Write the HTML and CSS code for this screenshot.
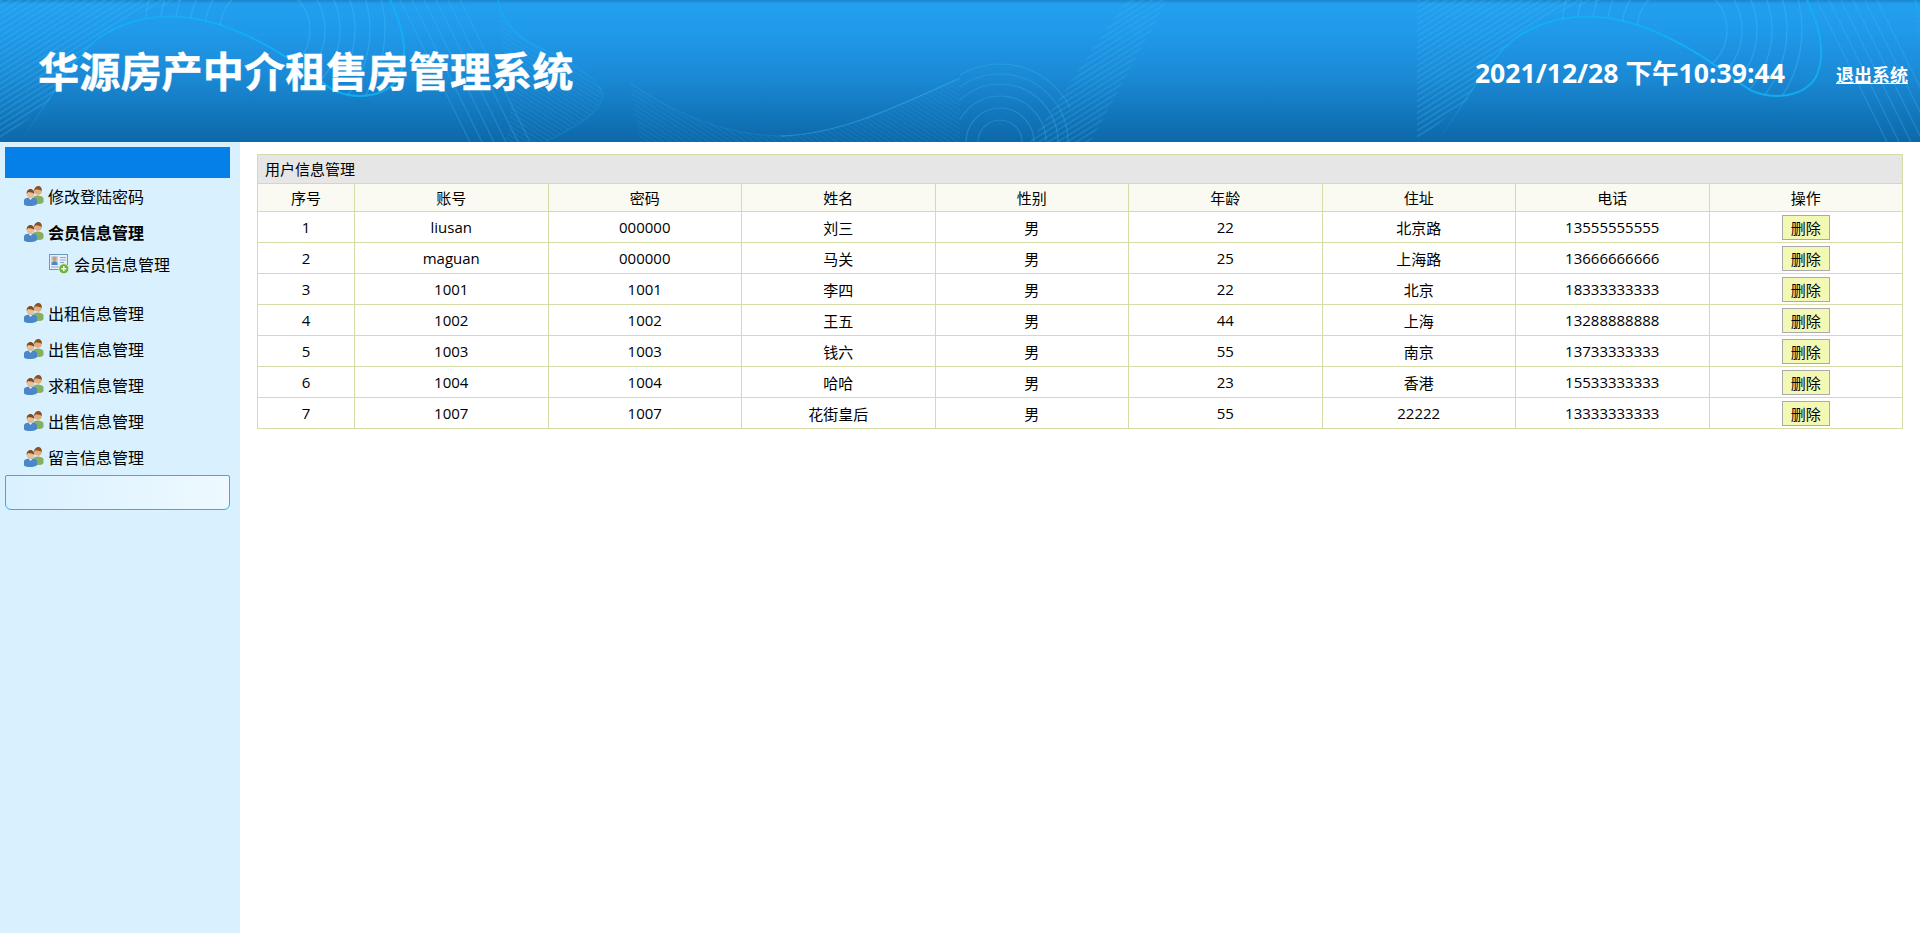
FILE: index.html
```html
<!DOCTYPE html>
<html lang="zh-CN">
<head>
  <meta charset="UTF-8" />
  <title>华源房产中介租售房管理系统</title>
  <link rel="stylesheet" href="styles.css">
</head>
<body>
  <svg class="sprites" width="0" height="0">
    <defs>
      <pattern id="hatch" width="5" height="5" patternUnits="userSpaceOnUse" patternTransform="rotate(-32)">
        <rect width="5" height="1.6" fill="#3fbdf7"/>
      </pattern>
      <pattern id="hatchB" width="4" height="4" patternUnits="userSpaceOnUse" patternTransform="rotate(32)">
        <rect width="4" height="1.2" fill="#3fbdf7"/>
      </pattern>
      <clipPath id="above-curve">
        <path d="M100 37C150 5 205 15 250 37 290 56 310 75 333 90 360 102 390 95 400 75 410 50 400 20 390 0H130Z"/>
      </clipPath>
      <clipPath id="right-half">
        <rect x="960" y="0" width="110" height="142"/>
      </clipPath>
      <linearGradient id="fade-left" x1="0" y1="1" x2="0" y2="0">
        <stop offset="0" stop-color="#12b2f6" stop-opacity="0"/>
        <stop offset="1" stop-color="#12b2f6" stop-opacity=".8"/>
      </linearGradient>
      <symbol id="wave" viewBox="0 0 1417 142">
        <path d="M0 0H190C130 10 90 30 50 100L0 142Z" fill="url(#hatch)" opacity=".3"/>
        <path d="M20 142C50 100 70 60 100 37" fill="none" stroke="url(#fade-left)" stroke-width="1.500"/>
        <path d="M100 37C150 5 205 15 250 37 290 56 310 75 333 90 360 102 390 95 400 75 410 50 400 20 390 0" fill="none" stroke="#12b2f6" stroke-width="2" opacity=".85"/>
        <g fill="none" stroke="#3fbdf7" stroke-width="1.300" opacity=".38" clip-path="url(#above-curve)">
          <circle cx="265" cy="30" r="45"/>
          <circle cx="265" cy="30" r="60"/>
          <circle cx="265" cy="30" r="75"/>
          <circle cx="265" cy="30" r="90"/>
          <circle cx="265" cy="30" r="105"/>
          <circle cx="265" cy="30" r="120"/>
        </g>
        <g fill="none" stroke="#3fbdf7" stroke-width="1.200" opacity=".3">
          <path d="M400 0L470 142"/><path d="M412 0L482 142"/><path d="M424 0L494 142"/>
          <path d="M436 0L506 142"/><path d="M448 0L518 142"/><path d="M460 0L530 142"/>
        </g>
        <path d="M498 0C500 50 560 40 603 90 600 115 570 130 545 142H505C520 100 498 50 498 0Z" fill="url(#hatchB)" opacity=".16"/>
        <path d="M498 0C503 25 520 40 545 50" fill="none" stroke="#12b2f6" stroke-width="1.800" opacity=".6"/>
        <path d="M545 50C575 62 598 78 603 95 600 115 570 130 545 142" fill="none" stroke="#12b2f6" stroke-width="1.500" opacity=".22"/>
        <path d="M630 83C670 110 720 135 780 136 840 135 900 105 960 78V142H640Z" fill="url(#hatchB)" opacity=".13"/>
        <path d="M780 136C840 135 900 105 960 78" fill="none" stroke="#3fbdf7" stroke-width="1.300" opacity=".4"/>
        <path d="M630 83C670 110 720 135 780 136" fill="none" stroke="#3fbdf7" stroke-width="1" opacity=".16"/>
        <g fill="none" stroke="#3fbdf7" stroke-width="1.200" opacity=".3" clip-path="url(#right-half)">
          <circle cx="1000" cy="142" r="22"/>
          <circle cx="1000" cy="142" r="34"/>
          <circle cx="1000" cy="142" r="46"/>
          <circle cx="1000" cy="142" r="58"/>
          <circle cx="1000" cy="142" r="68"/>
          <circle cx="1000" cy="142" r="78"/>
        </g>
        <path d="M1126 0H1168L1090 142H1030Z" fill="url(#hatch)" opacity=".25"/>
      </symbol>
      <symbol id="icon-users" viewBox="0 0 20 20">
        <path d="M9 18V12.500C9 10.500 11 9.500 13.500 9.500S19.500 10.500 19.500 12.500V15.500C19.500 17 18 18 15 18Z" fill="#86b060"/>
        <circle cx="14" cy="5" r="3.800" fill="#e0ac80"/>
        <path d="M10.200 5C10 1.500 12.500 0 14.500 0 16.500 0 18 1.500 17.900 5 16.500 3.500 13 3.500 12 3.200 11 3.800 10.800 4.500 10.200 5Z" fill="#8a5226"/>
        <path d="M0 18V14.500C0 12.500 2.500 11.500 6.500 11.500S13 12.500 13 14.500V17.500C13 19 10.500 20 6.500 20S0 19.500 0 18Z" fill="#4a86c8"/>
        <path d="M4.500 11.700H8.500L6.500 14Z" fill="#e8f2fb"/>
        <circle cx="6.500" cy="7.800" r="3.800" fill="#ecbc92"/>
        <path d="M2.700 7.800C2.500 4.500 4.500 3 6.500 3S10.500 4.500 10.300 7.800C9 6.300 6 6.500 4.500 6 3.800 6.500 3.200 7 2.700 7.800Z" fill="#7f4a22"/>
      </symbol>
      <symbol id="icon-card" viewBox="0 0 20 20">
        <rect x=".5" y=".5" width="18" height="15" fill="#e6f0fa" stroke="#6f97c4"/>
        <rect x="2" y="2" width="7" height="9" fill="#bcd3ea"/>
        <circle cx="5.500" cy="4.800" r="2.200" fill="#d69a6a"/>
        <path d="M2.500 11C2.500 8 4 7.300 5.500 7.300S8.500 8 8.500 11Z" fill="#4a86c8"/>
        <path d="M11 3.500H17M11 6H17M11 8.500H15" stroke="#8ca8c6"/>
        <path d="M2 13H10" stroke="#8ca8c6"/>
        <circle cx="14.800" cy="14.800" r="5" fill="#6cb33a" stroke="#eaf5de" stroke-width=".8"/>
        <path d="M12.300 14.800H17.300M14.800 12.300V17.300" stroke="#fff" stroke-width="1.500"/>
      </symbol>
    </defs>
  </svg>

  <header class="top">
    <svg class="top-wave" width="2834" height="142" aria-hidden="true">
      <use href="#wave" width="1417" height="142"/>
      <use href="#wave" x="1417" width="1417" height="142"/>
    </svg>
    <h1 class="top-title">华源房产中介租售房管理系统</h1>
    <div class="top-clock">2021/12/28 下午10:39:44</div>
    <a class="top-exit" href="#">退出系统</a>
  </header>

  <div class="page">
    <aside class="side">
      <div class="side-head"></div>
      <a class="menu-item" href="#"><svg class="ico"><use href="#icon-users"/></svg>修改登陆密码</a>
      <a class="menu-item menu-open" href="#"><svg class="ico"><use href="#icon-users"/></svg>会员信息管理</a>
      <div class="submenu">
        <a class="sub-item" href="#"><svg class="ico"><use href="#icon-card"/></svg>会员信息管理</a>
      </div>
      <a class="menu-item" href="#"><svg class="ico"><use href="#icon-users"/></svg>出租信息管理</a>
      <a class="menu-item" href="#"><svg class="ico"><use href="#icon-users"/></svg>出售信息管理</a>
      <a class="menu-item" href="#"><svg class="ico"><use href="#icon-users"/></svg>求租信息管理</a>
      <a class="menu-item" href="#"><svg class="ico"><use href="#icon-users"/></svg>出售信息管理</a>
      <a class="menu-item" href="#"><svg class="ico"><use href="#icon-users"/></svg>留言信息管理</a>
      <div class="side-foot"></div>
    </aside>

    <main class="content">
      <table class="grid">
        <colgroup>
          <col class="col-id">
          <col><col><col><col><col><col><col><col>
        </colgroup>
        <thead>
          <tr><th class="grid-title" colspan="9">用户信息管理</th></tr>
          <tr class="grid-head">
            <th>序号</th><th>账号</th><th>密码</th><th>姓名</th><th>性别</th><th>年龄</th><th>住址</th><th>电话</th><th>操作</th>
          </tr>
        </thead>
        <tbody>
          <tr><td>1</td><td>liusan</td><td>000000</td><td>刘三</td><td>男</td><td>22</td><td>北京路</td><td>13555555555</td><td><button class="btn-del">删除</button></td></tr>
          <tr><td>2</td><td>maguan</td><td>000000</td><td>马关</td><td>男</td><td>25</td><td>上海路</td><td>13666666666</td><td><button class="btn-del">删除</button></td></tr>
          <tr><td>3</td><td>1001</td><td>1001</td><td>李四</td><td>男</td><td>22</td><td>北京</td><td>18333333333</td><td><button class="btn-del">删除</button></td></tr>
          <tr><td>4</td><td>1002</td><td>1002</td><td>王五</td><td>男</td><td>44</td><td>上海</td><td>13288888888</td><td><button class="btn-del">删除</button></td></tr>
          <tr><td>5</td><td>1003</td><td>1003</td><td>钱六</td><td>男</td><td>55</td><td>南京</td><td>13733333333</td><td><button class="btn-del">删除</button></td></tr>
          <tr><td>6</td><td>1004</td><td>1004</td><td>哈哈</td><td>男</td><td>23</td><td>香港</td><td>15533333333</td><td><button class="btn-del">删除</button></td></tr>
          <tr><td>7</td><td>1007</td><td>1007</td><td>花街皇后</td><td>男</td><td>55</td><td>22222</td><td>13333333333</td><td><button class="btn-del">删除</button></td></tr>
        </tbody>
      </table>
    </main>
  </div>
</body>
</html>
```

FILE: styles.css
```css
* {
  box-sizing: border-box;
  margin: 0;
  padding: 0;
}

html, body {
  height: 100%;
}

body {
  background: #fff;
  color: #000;
  font-family: "Open Sans", "Noto Sans CJK SC", sans-serif;
  overflow: hidden;
}

a {
  color: inherit;
  text-decoration: none;
}

.sprites {
  display: block;
  height: 0;
}

/* header */
.top {
  position: relative;
  display: flex;
  align-items: center;
  height: 142px;
  padding: 0 12px 0 38px;
  overflow: hidden;
  color: #fff;
  background: linear-gradient(#1a86cc 0, #22a0ef 4px, #209aea 30px, #1b8ad6 75px, #0d68a8 100%);
}

.top-wave {
  position: absolute;
  top: 0;
  left: 0;
}

.top-title {
  position: relative;
  flex: 1;
  margin-top: -4px;
  font-size: 41.2px;
  font-weight: 700;
  -webkit-text-stroke: 0.4px #fff;
}

.top-clock {
  position: relative;
  font-size: 26.6px;
  font-weight: 700;
}

.top-exit {
  position: relative;
  margin-top: 6px;
  margin-left: 51px;
  font-size: 18px;
  font-weight: 700;
  text-decoration: underline;
}

/* layout */
.page {
  display: flex;
  height: calc(100% - 142px);
}

.side {
  flex: 0 0 240px;
  padding: 5px 10px 0 5px;
  background: #d9f1ff;
}

.side-head {
  height: 31px;
  background: #0580e8;
}

.menu-item {
  display: flex;
  align-items: center;
  gap: 4px;
  height: 36px;
  padding-left: 19px;
  font-size: 16px;
}

.menu-open {
  font-weight: 700;
}

.submenu {
  padding: 0 0 17px 44px;
}

.sub-item {
  display: flex;
  align-items: center;
  gap: 5px;
  height: 28px;
  font-size: 16px;
}

.ico {
  flex: none;
  width: 20px;
  height: 20px;
}

.side-foot {
  height: 35px;
  border: 1px solid #1fb8ee;
  border-radius: 2px 2px 6px 6px;
  background: linear-gradient(90deg, #d9f1ff, #eef9ff);
}

/* table */
.content {
  flex: 1;
  padding: 12px 17px 0;
}

.grid {
  width: 1646px;
  border-collapse: collapse;
  table-layout: fixed;
  font-size: 15px;
}

.col-id {
  width: 97px;
}

.grid th,
.grid td {
  border: 1px solid #d5dca8;
  text-align: center;
  font-weight: 400;
  padding: 0;
}

.grid td {
  height: 31px;
}

.grid .grid-title {
  height: 29px;
  padding: 0 0 2px 7px;
  text-align: left;
  background: #e6e6e6;
}

.grid-head th {
  height: 28px;
  background: #fafaf2;
}

.btn-del {
  display: block;
  width: 48px;
  height: 25px;
  margin: 0 auto;
  border: 1px solid #aaa;
  background: #f3f8b5;
  color: #000;
  font: inherit;
  cursor: pointer;
}
```
